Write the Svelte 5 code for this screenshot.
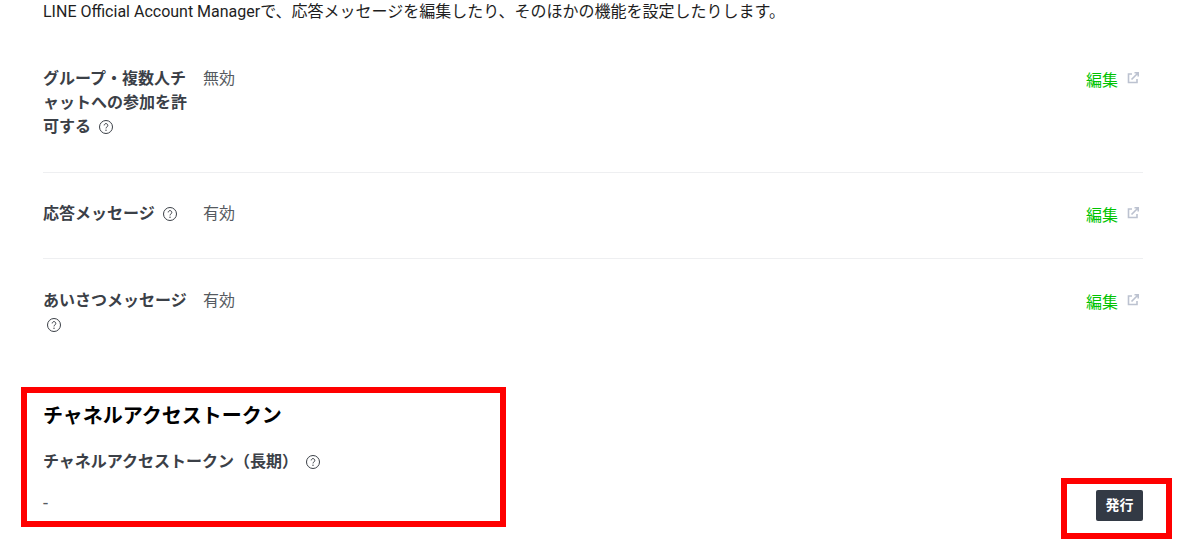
<script>
  const rows = [
    { label: 'グループ・複数人チャットへの参加を許可する', value: '無効' },
    { label: '応答メッセージ', value: '有効' },
    { label: 'あいさつメッセージ', value: '有効' }
  ];
</script>

{#snippet help()}
  <svg class="help" viewBox="0 0 16 16" width="16" height="16" aria-hidden="true">
    <circle cx="8" cy="8" r="6.5" fill="none" stroke="#3b4047" stroke-width="1" />
    <path d="M6.2 6.4a1.8 1.8 0 1 1 2.8 1.5c-.6.4-1 .7-1 1.5" fill="none" stroke="#3b4047" stroke-width="1" />
    <circle cx="8" cy="11.2" r=".7" fill="#3b4047" />
  </svg>
{/snippet}

<main class="page">
  <p class="intro">LINE Official Account Managerで、応答メッセージを編集したり、そのほかの機能を設定したりします。</p>

  <div class="rows">
    {#each rows as row}
      <div class="row">
        <div class="label">{row.label} {@render help()}</div>
        <div class="value">{row.value}</div>
        <a class="edit" href="#edit">編集
          <svg class="ext" viewBox="0 0 12 12" width="12" height="12" aria-hidden="true">
            <path d="M5 2H1.5v8.5H10V7" fill="none" stroke="#bcc2d0" stroke-width="1.6" />
            <path d="M4.5 7.5 11 1M7.5 .8h3.7v3.7" fill="none" stroke="#bcc2d0" stroke-width="1.6" />
          </svg>
        </a>
      </div>
    {/each}
  </div>

  <section class="token">
    <h2>チャネルアクセストークン</h2>
    <div class="token-label">チャネルアクセストークン（長期） {@render help()}</div>
    <div class="token-foot">
      <span class="dash">-</span>
      <button>発行</button>
    </div>
  </section>

  <div class="mark mark-a"></div>
  <div class="mark mark-b"></div>
</main>

<style>
  :global(body) {
    margin: 0;
    background: #fff;
  }
  .page {
    position: relative;
    box-sizing: border-box;
    width: 1179px;
    height: 559px;
    overflow: hidden;
    padding-left: 43px;
    font-family: Roboto, "Noto Sans CJK JP", sans-serif;
    font-size: 16px;
    line-height: 24px;
    color: #3b4047;
  }
  .intro {
    margin: 0;
    color: #1e1e1e;
    height: 24px;
    white-space: nowrap;
  }
  .rows {
    width: 1100px;
    padding-top: 11px;
  }
  .row {
    display: flex;
    padding: 32px 0 33px;
    border-bottom: 1px solid #eeeff1;
  }
  .row:nth-child(2) {
    padding: 29px 0 30px;
  }
  .row:last-child {
    padding: 30px 0 0;
    border-bottom: 0;
  }
  .label {
    width: 144px;
    margin-right: 16px;
    font-weight: 700;
    word-break: break-all;
  }
  .help {
    vertical-align: -3px;
    margin-left: 3px;
  }
  .value {
    flex: 1;
    color: #555a60;
  }
  .edit {
    display: flex;
    gap: 9px;
    align-items: flex-start;
    padding-right: 4px;
    padding-top: 2px;
    color: #00c300;
    text-decoration: none;
  }
  .ext {
    margin-top: 3px;
  }
  .token {
    width: 1100px;
    padding-top: 67px;
  }
  h2 {
    margin: 0;
    font-size: 20px;
    line-height: 24px;
    color: #000;
    font-weight: 700;
  }
  .token-label {
    margin-top: 22px;
    font-weight: 700;
  }
  .token-foot {
    display: flex;
    justify-content: space-between;
    align-items: flex-start;
    margin-top: 16px;
  }
  .dash {
    padding-top: 1px;
    color: #555a60;
    font-size: 18px;
  }
  button {
    width: 47px;
    height: 31px;
    padding: 0;
    border: 0;
    border-radius: 2px;
    background: #333a45;
    color: #fff;
    font: 700 14px/31px Roboto, "Noto Sans CJK JP", sans-serif;
  }
  .mark {
    position: absolute;
    box-sizing: border-box;
    border: 6px solid #f00;
  }
  .mark-a {
    left: 21px;
    top: 387px;
    width: 485px;
    height: 140px;
  }
  .mark-b {
    left: 1061px;
    top: 478px;
    width: 111px;
    height: 61px;
  }
</style>
